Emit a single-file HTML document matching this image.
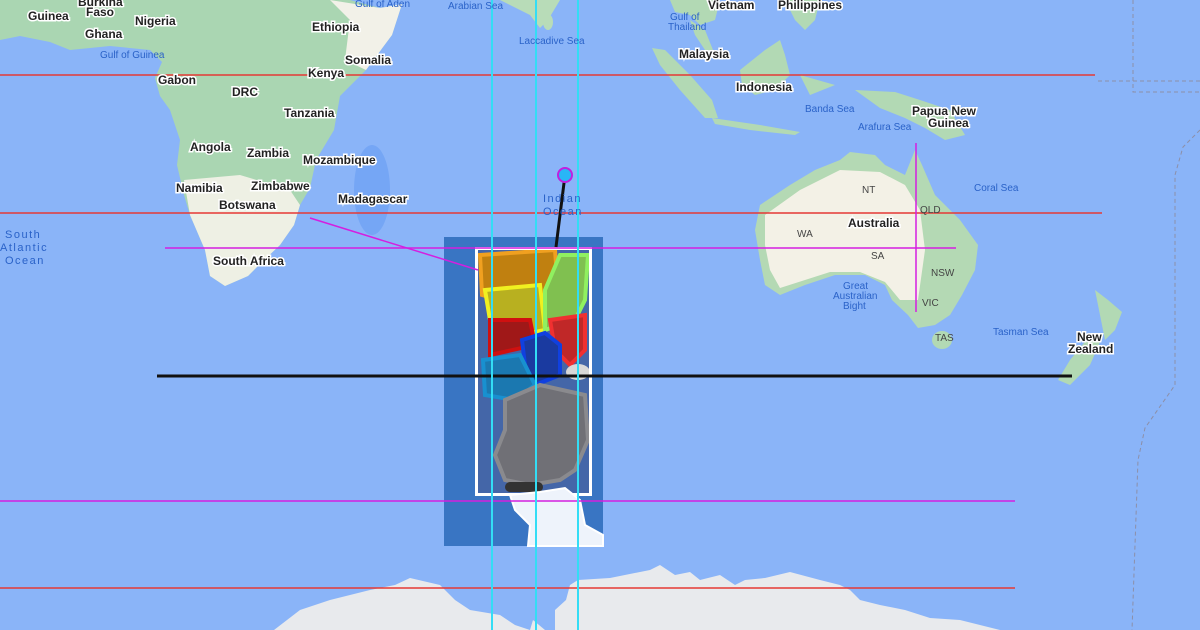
<!DOCTYPE html>
<html><head><meta charset="utf-8"><style>
html,body{margin:0;padding:0;width:1200px;height:630px;overflow:hidden;background:#8ab4f8}
svg{display:block}
text{font-family:"Liberation Sans",sans-serif}
.c{font-size:12px;font-weight:bold;fill:#222;stroke:#fff;stroke-width:3px;paint-order:stroke}
.s{font-size:10px;fill:#444}
.o{font-size:10px;fill:#2a62c8}
.oc{font-size:11px;fill:#2a62c8;letter-spacing:1.5px}
</style></head><body>
<svg width="1200" height="630" viewBox="0 0 1200 630">
<rect width="1200" height="630" fill="#8ab4f8"/>
<path d="M0,0 L350,0 L380,8 L402,4 L392,35 L366,70 L340,96 L334,130 L316,160 L310,188 L300,205 L294,225 L280,245 L262,262 L248,276 L225,286 L210,276 L205,250 L190,215 L184,195 L177,165 L180,140 L170,110 L160,96 L155,78 L162,62 L150,50 L110,46 L70,50 L50,42 L20,36 L0,40 Z" fill="#aad6b2"/>
<path d="M184,180 L240,175 L290,190 L300,205 L294,225 L280,245 L262,262 L248,276 L225,286 L210,276 L205,250 L190,215 Z" fill="#eef0e4"/>
<path d="M330,0 L380,8 L402,4 L392,35 L366,70 L345,60 L350,20 Z" fill="#f2f1e8"/>
<ellipse cx="372" cy="190" rx="18" ry="45" fill="#75a6f5"/>
<path d="M500,0 L560,0 L548,20 L540,28 L530,15 Z" fill="#b8dcb8"/>
<ellipse cx="548" cy="22" rx="5" ry="8" fill="#b8dcb8"/>
<path d="M670,0 L720,0 L715,20 L700,25 L690,15 L675,12 Z" fill="#b2d9b4"/>
<path d="M690,20 L705,30 L715,55 L705,50 L695,35 Z" fill="#b2d9b4"/>
<path d="M652,48 L665,50 L690,75 L712,100 L718,118 L705,118 L680,90 L660,65 Z" fill="#b2d9b4"/>
<path d="M740,70 L765,50 L780,40 L785,55 L790,75 L775,90 L755,95 L742,85 Z" fill="#b2d9b4"/>
<path d="M785,0 L820,0 L815,20 L805,30 L795,20 Z" fill="#b2d9b4"/>
<path d="M712,118 L760,125 L800,132 L795,135 L750,130 L715,124 Z" fill="#b2d9b4"/>
<path d="M800,75 L835,85 L810,95 Z" fill="#b2d9b4"/>
<path d="M855,90 L895,92 L920,100 L950,110 L965,135 L945,140 L925,128 L905,118 L880,108 Z" fill="#b2d9b4"/>
<path d="M755,230 L760,205 L790,185 L815,170 L840,160 L850,152 L875,155 L885,165 L905,175 L915,150 L922,165 L935,195 L960,220 L978,245 L975,270 L962,295 L950,315 L935,325 L918,328 L908,315 L892,300 L885,285 L865,275 L835,275 L805,285 L780,295 L765,285 L760,260 Z" fill="#b4d9b4"/>
<path d="M765,215 L800,190 L840,170 L880,172 L905,185 L920,210 L925,250 L918,300 L900,300 L885,282 L860,272 L830,272 L805,280 L780,288 L770,270 L765,245 Z" fill="#f3f1e6"/>
<ellipse cx="942" cy="340" rx="10" ry="9" fill="#b2d9b4"/>
<path d="M1095,290 L1108,300 L1122,312 L1115,330 L1105,340 L1100,315 Z" fill="#b2d9b4"/>
<path d="M1088,338 L1100,342 L1090,365 L1070,385 L1058,380 L1070,360 Z" fill="#b2d9b4"/>
<path d="M274,630 L300,610 L330,600 L370,590 L395,585 L410,578 L440,585 L455,600 L470,610 L500,615 L515,625 L530,630 L533,620 L545,630 L555,630 L555,610 L566,600 L570,585 L578,580 L610,578 L650,570 L660,565 L675,575 L690,572 L700,580 L720,575 L735,585 L745,580 L765,578 L790,572 L820,580 L840,585 L850,590 L860,600 L880,605 L905,610 L930,618 L960,620 L1000,630 Z" fill="#e8eaed"/>
<path d="M1133,0 L1133,92 L1200,92 M1098,81 L1200,81 M1200,130 L1183,147 L1175,175 L1175,385 L1145,428 L1138,460 L1132,630" stroke="#8c8fa8" stroke-dasharray="4,3" fill="none"/>
<rect x="444" y="237" width="159" height="309" fill="#3572c0" opacity="0.95"/>
<rect x="478" y="249" width="113" height="245" fill="#4466a8"/>
<path d="M480,255 L555,250 L558,290 L530,300 L500,300 L482,295 Z" fill="#c08010" stroke="#f0a020" stroke-width="4"/>
<path d="M485,290 L540,285 L545,330 L520,335 L490,320 Z" fill="#b8b020" stroke="#f0f020" stroke-width="4"/>
<path d="M545,290 L560,255 L588,255 L585,300 L575,320 L545,330 Z" fill="#80c050" stroke="#90f060" stroke-width="4"/>
<path d="M490,320 L530,320 L535,345 L490,355 Z" fill="#a01818" stroke="#d01010" stroke-width="4"/>
<path d="M550,320 L585,315 L585,350 L570,365 L555,350 Z" fill="#c02828" stroke="#f03030" stroke-width="4"/>
<path d="M522,340 L545,333 L560,345 L560,375 L535,385 L525,365 Z" fill="#1a3aa0" stroke="#1040e0" stroke-width="4"/>
<path d="M483,360 L520,355 L535,385 L515,400 L485,395 Z" fill="#1b78b0" stroke="#1890d0" stroke-width="4"/>
<path d="M505,400 L540,385 L585,395 L588,440 L575,470 L560,480 L530,485 L505,480 L495,455 L505,430 Z" fill="#707076" stroke="#8a8a8e" stroke-width="4"/>
<ellipse cx="578" cy="372" rx="12" ry="8" fill="#d8d8d8"/>
<rect x="505" y="482" width="38" height="10" rx="5" fill="#333"/>
<rect x="476.5" y="248.5" width="114" height="246" fill="none" stroke="#fff" stroke-width="3"/>
<path d="M510,495 L540,492 L565,488 L580,500 L585,525 L603,535 L603,546 L528,546 L530,525 L515,510 Z" fill="#eef3fb" stroke="#fff" stroke-width="2"/>
<line x1="0" y1="75" x2="1095" y2="75" stroke="#e53935" stroke-width="1.5"/>
<line x1="0" y1="213" x2="1102" y2="213" stroke="#e53935" stroke-width="1.5"/>
<line x1="0" y1="588" x2="1015" y2="588" stroke="#e53935" stroke-width="1.5"/>
<line x1="165" y1="248" x2="956" y2="248" stroke="#d41fe0" stroke-width="1.5"/>
<line x1="0" y1="501" x2="1015" y2="501" stroke="#d41fe0" stroke-width="1.5"/>
<line x1="916" y1="143" x2="916" y2="312" stroke="#d41fe0" stroke-width="1.5"/>
<line x1="310" y1="218" x2="478" y2="270" stroke="#d41fe0" stroke-width="1.5"/>
<line x1="157" y1="376" x2="1072" y2="376" stroke="#111" stroke-width="3"/>
<line x1="565" y1="175" x2="556" y2="247" stroke="#111" stroke-width="3"/>
<line x1="492" y1="0" x2="492" y2="630" stroke="#33ddf5" stroke-width="2"/>
<line x1="536" y1="0" x2="536" y2="630" stroke="#33ddf5" stroke-width="2"/>
<line x1="578" y1="0" x2="578" y2="630" stroke="#33ddf5" stroke-width="2"/>
<circle cx="565" cy="175" r="7" fill="#29b6f6" stroke="#c020e0" stroke-width="2"/>
<text class="c" x="28" y="20">Guinea</text>
<text class="c" x="78" y="6">Burkina</text>
<text class="c" x="86" y="16">Faso</text>
<text class="c" x="135" y="25">Nigeria</text>
<text class="c" x="85" y="38">Ghana</text>
<text class="o" x="100" y="58">Gulf of Guinea</text>
<text class="c" x="312" y="31">Ethiopia</text>
<text class="c" x="345" y="64">Somalia</text>
<text class="o" x="355" y="7">Gulf of Aden</text>
<text class="o" x="448" y="9">Arabian Sea</text>
<text class="c" x="158" y="84">Gabon</text>
<text class="c" x="308" y="77">Kenya</text>
<text class="c" x="232" y="96">DRC</text>
<text class="c" x="284" y="117">Tanzania</text>
<text class="c" x="190" y="151">Angola</text>
<text class="c" x="247" y="157">Zambia</text>
<text class="c" x="303" y="164">Mozambique</text>
<text class="c" x="176" y="192">Namibia</text>
<text class="c" x="251" y="190">Zimbabwe</text>
<text class="c" x="219" y="209">Botswana</text>
<text class="c" x="338" y="203">Madagascar</text>
<text class="c" x="213" y="265">South Africa</text>
<text class="oc" x="5" y="238">South</text>
<text class="oc" x="0" y="251">Atlantic</text>
<text class="oc" x="5" y="264">Ocean</text>
<text class="o" x="519" y="44">Laccadive Sea</text>
<text class="oc" x="543" y="202">Indian</text>
<text class="oc" x="543" y="215">Ocean</text>
<text class="c" x="708" y="9">Vietnam</text>
<text class="c" x="778" y="9">Philippines</text>
<text class="o" x="670" y="20">Gulf of</text>
<text class="o" x="668" y="30">Thailand</text>
<text class="c" x="679" y="58">Malaysia</text>
<text class="c" x="736" y="91">Indonesia</text>
<text class="o" x="805" y="112">Banda Sea</text>
<text class="c" x="912" y="115">Papua New</text>
<text class="c" x="928" y="127">Guinea</text>
<text class="o" x="858" y="130">Arafura Sea</text>
<text class="o" x="974" y="191">Coral Sea</text>
<text class="s" x="862" y="193">NT</text>
<text class="s" x="920" y="213">QLD</text>
<text class="s" x="797" y="237">WA</text>
<text class="c" x="848" y="227">Australia</text>
<text class="s" x="871" y="259">SA</text>
<text class="s" x="931" y="276">NSW</text>
<text class="s" x="922" y="306">VIC</text>
<text class="s" x="935" y="341">TAS</text>
<text class="o" x="843" y="289">Great</text>
<text class="o" x="833" y="299">Australian</text>
<text class="o" x="843" y="309">Bight</text>
<text class="o" x="993" y="335">Tasman Sea</text>
<text class="c" x="1077" y="341">New</text>
<text class="c" x="1068" y="353">Zealand</text>
</svg>
</body></html>
